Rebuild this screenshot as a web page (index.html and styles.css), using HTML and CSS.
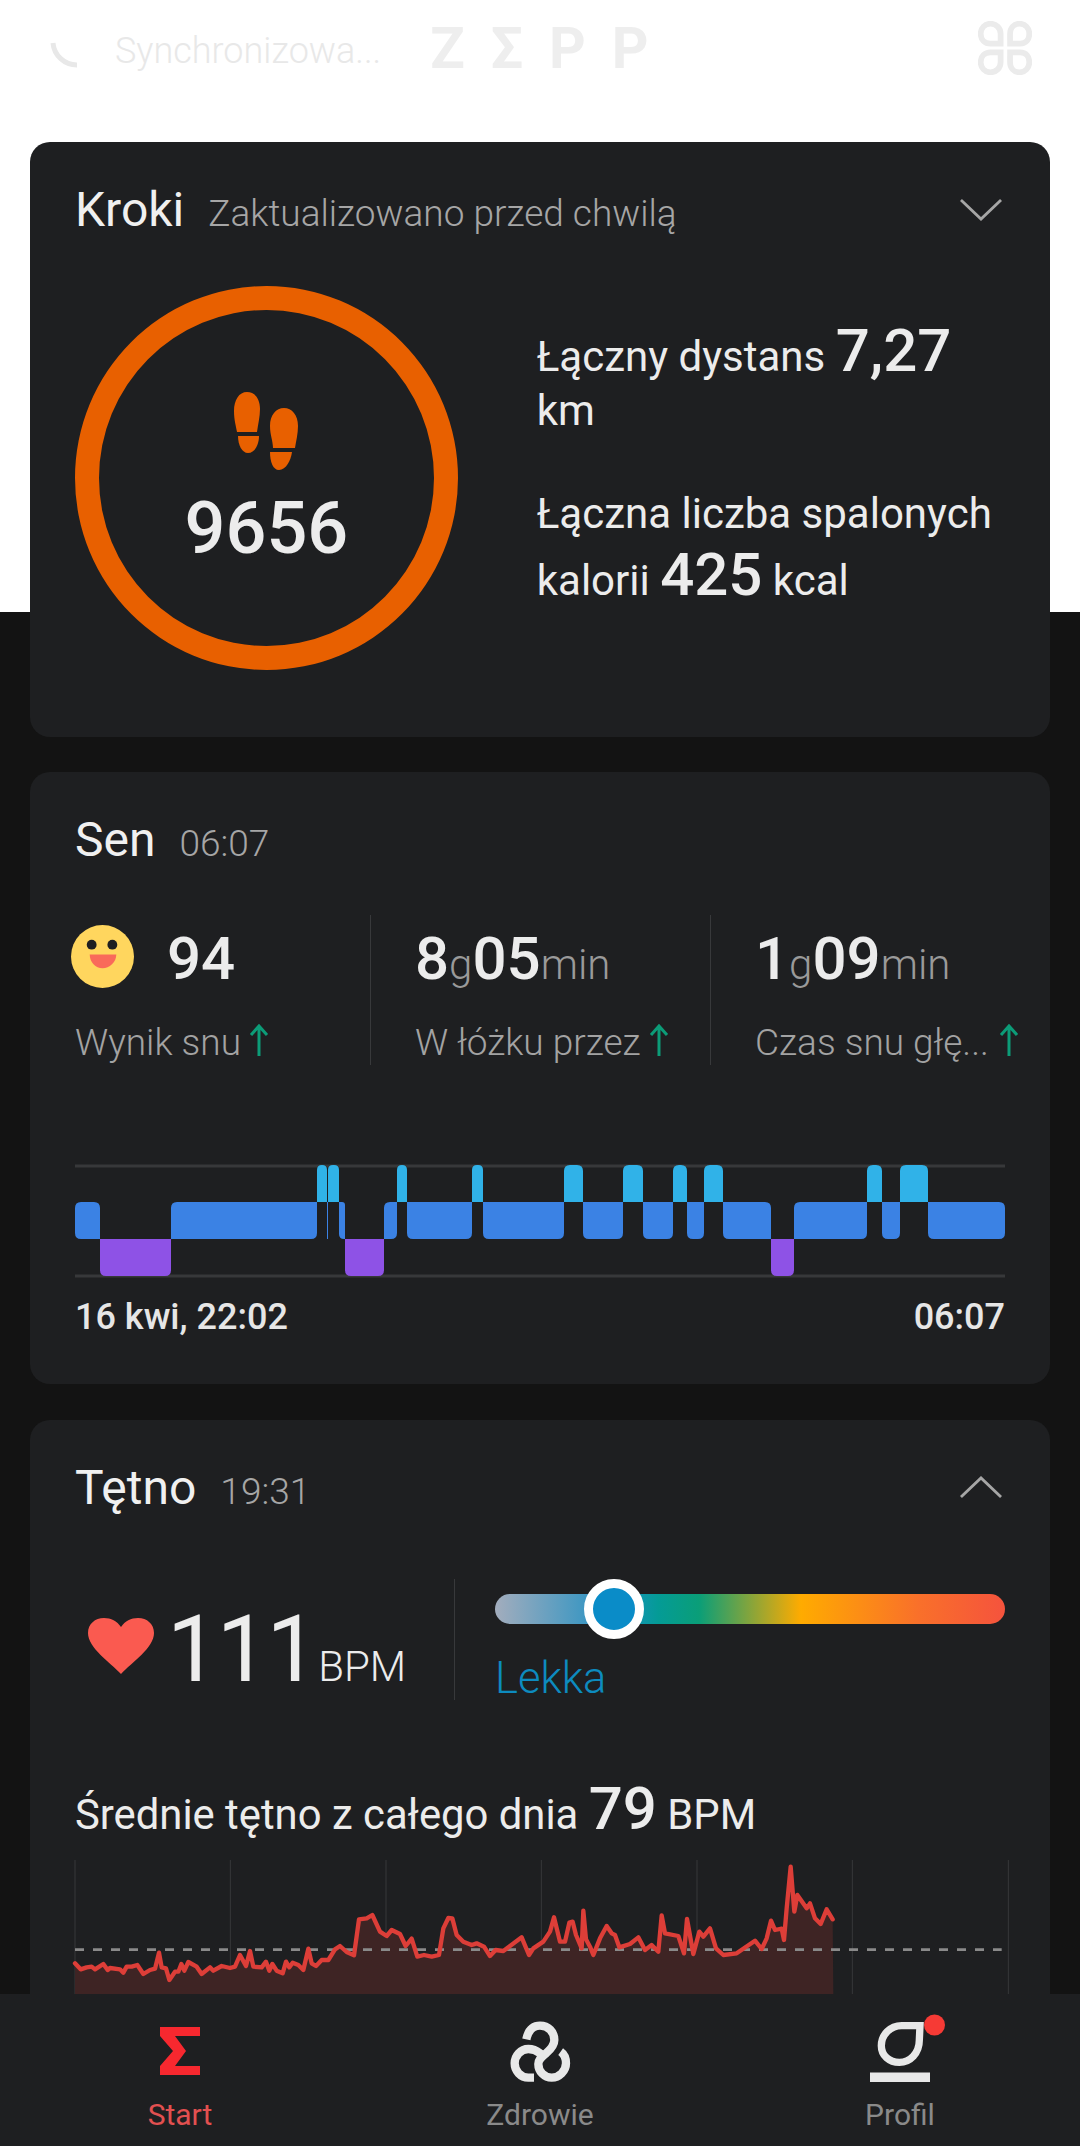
FILE: index.html
```html
<!DOCTYPE html>
<html lang="pl">
  <head>
    <meta charset="UTF-8" />
    <title>Zepp</title>
    <link rel="stylesheet" href="styles.css" />
  </head>
  <body>
    <header class="top">
      <svg class="spinner" viewBox="0 0 30 30">
        <path d="M3 2A24 24 0 0 0 27 24" />
      </svg>
      <span class="sync">Synchronizowa...</span>
      <span class="logo">ZΣPP</span>
      <svg class="apps" viewBox="235 30 160 160">
        <path d="M302 97H272C255 97 243 85 243 68C243 51 255 38 272 38C289 38 302 51 302 68Z" />
        <path d="M330 97H360C377 97 387 85 387 68C387 51 375 38 358 38C341 38 330 51 330 68Z" />
        <path d="M302 123H272C255 123 243 135 243 152C243 169 255 182 272 182C289 182 302 169 302 152Z" />
        <path d="M330 123H360C377 123 387 135 387 152C387 169 375 182 358 182C341 182 330 169 330 152Z" />
      </svg>
    </header>

    <main>
      <section class="card card-steps">
        <div class="card-head">
          <h2>Kroki</h2>
          <span class="sub">Zaktualizowano przed chwilą</span>
          <svg class="chevron" viewBox="0 0 44 24">
            <path d="M1 2L22 22L43 2" />
          </svg>
        </div>
        <div class="steps-body">
          <div class="ring">
            <svg class="feet" viewBox="237 392 64 78">
              <path d="M250 392c8 0 13 7 13 17c0 8-2 15-3 23h-20c-1-6-3-12-3-21c0-11 5-19 13-19z" />
              <path d="M241 436h21c0 8-4 17-11 17c-6 0-10-8-10-17z" />
              <path d="M287 408c8 0 14 7 14 18c0 8-2 15-3 22h-22c0-7-3-13-3-22c0-11 6-18 14-18z" />
              <path d="M273 452h22c-1 8-6 18-13 18c-6 0-9-8-9-18z" />
            </svg>
            <span class="ring-value">9656</span>
          </div>
          <div class="steps-info">
            <p>Łączny dystans <b>7,27</b> km</p>
            <p>Łączna liczba spalonych kalorii <b>425</b> kcal</p>
          </div>
        </div>
      </section>

      <section class="card card-sleep">
        <div class="card-head">
          <h2>Sen</h2>
          <span class="sub">06:07</span>
        </div>
        <div class="sleep-stats">
          <div class="stat">
            <div class="stat-value">
              <svg class="face" viewBox="0 0 64 64">
                <circle cx="32" cy="32" r="32" fill="#ffd65e" />
                <circle cx="21" cy="20" r="5" fill="#1e1f21" />
                <circle cx="42" cy="20" r="5" fill="#1e1f21" />
                <path d="M19 30H46C46 38 39 44 32 44C25 44 19 38 19 30Z" fill="#f96a5a" />
              </svg>
              <b>94</b>
            </div>
            <div class="stat-label">
              <span>Wynik snu</span>
              <svg class="up" viewBox="0 0 20 32"><path d="M10 32V2M2 11L10 2L18 11" /></svg>
            </div>
          </div>
          <div class="stat">
            <div class="stat-value"><b>8</b><small>g</small><b>05</b><small>min</small></div>
            <div class="stat-label">
              <span>W łóżku przez</span>
              <svg class="up" viewBox="0 0 20 32"><path d="M10 32V2M2 11L10 2L18 11" /></svg>
            </div>
          </div>
          <div class="stat">
            <div class="stat-value"><b>1</b><small>g</small><b>09</b><small>min</small></div>
            <div class="stat-label">
              <span>Czas snu głę...</span>
              <svg class="up" viewBox="0 0 20 32"><path d="M10 32V2M2 11L10 2L18 11" /></svg>
            </div>
          </div>
        </div>
        <svg class="sleep-chart" viewBox="75 1160 930 120">
          <path class="grid" d="M75 1166H1005M75 1276H1005" />
          <path class="light" d="M317 1202V1170q0-5 5-5h0q5 0 5 5V1202zM328 1202V1170q0-5 5-5h1q5 0 5 5V1202zM397 1202V1170q0-5 5-5h0q5 0 5 5V1202zM472 1202V1170q0-5 5-5h1q5 0 5 5V1202zM564 1202V1171q0-6 6-6h7q6 0 6 6V1202zM623 1202V1171q0-6 6-6h8q6 0 6 6V1202zM673 1202V1171q0-6 6-6h2q6 0 6 6V1202zM704 1202V1171q0-6 6-6h7q6 0 6 6V1202zM867 1202V1171q0-6 6-6h3q6 0 6 6V1202zM900 1202V1171q0-6 6-6h16q6 0 6 6V1202z" />
          <path class="blue" d="M81 1202H94q6 0 6 6V1239H81q-6 0-6-6V1208q0-6 6-6zM177 1202H317V1233q0 6-6 6H171V1208q0-6 6-6zM327 1202h1V1239h-1zM339 1202H342q3 0 3 3V1239H344q-5 0-5-5zM390 1202H397V1233q0 6-6 6H384V1208q0-6 6-6zM407 1202H472V1233q0 6-6 6H413q-6 0-6-6zM483 1202H564V1233q0 6-6 6H489q-6 0-6-6zM583 1202H623V1233q0 6-6 6H589q-6 0-6-6zM643 1202H673V1233q0 6-6 6H649q-6 0-6-6zM687 1202H704V1233q0 6-6 6H693q-6 0-6-6zM723 1202H765q6 0 6 6V1239H729q-6 0-6-6zM800 1202H867V1233q0 6-6 6H794V1208q0-6 6-6zM882 1202H900V1233q0 6-6 6H888q-6 0-6-6zM928 1202H999q6 0 6 6V1233q0 6-6 6H934q-6 0-6-6z" />
          <path class="purple" d="M100 1239H171V1270q0 6-6 6H106q-6 0-6-6zM345 1239H384V1270q0 6-6 6H351q-6 0-6-6zM771 1239H794V1270q0 6-6 6H777q-6 0-6-6z" />
        </svg>
        <div class="sleep-times">
          <span>16 kwi, 22:02</span>
          <span>06:07</span>
        </div>
      </section>

      <section class="card card-heart">
        <div class="card-head">
          <h2>Tętno</h2>
          <span class="sub">19:31</span>
          <svg class="chevron" viewBox="0 0 44 24">
            <path d="M1 22L22 2L43 22" />
          </svg>
        </div>
        <div class="heart-row">
          <div class="heart-now">
            <svg class="heart" viewBox="0 0 66 56">
              <path d="M33 56C22 44 0 30 0 15C0 6 7 0 16 0C23 0 29 3 33 9C37 3 43 0 50 0C59 0 66 6 66 15C66 30 44 44 33 56Z" />
            </svg>
            <span class="bpm-value">111</span>
            <span class="bpm-unit">BPM</span>
          </div>
          <div class="zone">
            <div class="zone-track"><span class="zone-knob"></span></div>
            <span class="zone-name">Lekka</span>
          </div>
        </div>
        <p class="average">Średnie tętno z całego dnia <b>79</b> BPM</p>
        <svg class="heart-chart" viewBox="45 0 2805 432">
          <path class="grid" d="M45 30V432M511 30V432M978 30V432M1444 30V432M1911 30V432M2377 30V432M2845 30V432" />
          <polygon class="area" points="45,340 62,358 80,352 95,350 105,358 130,342 143,360 150,354 180,358 190,368 200,350 215,350 232,345 250,372 270,360 285,356 297,308 305,352 318,355 328,390 345,365 355,365 364,342 373,362 385,336 410,350 425,372 450,352 460,362 485,348 510,354 525,350 540,315 558,348 570,303 580,350 605,352 618,335 628,362 637,342 650,362 668,370 678,335 688,352 698,338 715,345 730,360 745,296 755,340 768,348 785,330 805,330 825,298 840,288 860,306 882,316 897,208 920,205 937,195 960,245 980,258 995,240 1020,252 1037,288 1055,266 1072,320 1092,315 1115,320 1137,315 1150,235 1165,204 1177,205 1190,255 1210,275 1235,285 1250,280 1272,290 1290,318 1307,300 1330,303 1350,288 1385,262 1407,315 1420,295 1450,275 1470,245 1482,202 1500,275 1515,275 1528,218 1538,215 1548,255 1565,295 1570,182 1578,268 1590,290 1600,315 1620,265 1640,228 1655,250 1665,255 1678,292 1710,282 1735,262 1755,300 1775,285 1795,305 1805,196 1815,250 1855,258 1872,310 1881,207 1900,312 1918,245 1930,260 1950,235 1968,295 1990,315 2030,310 2085,272 2105,297 2120,265 2133,212 2145,240 2165,236 2172,270 2180,175 2192,50 2203,185 2212,135 2240,175 2250,160 2265,205 2282,222 2300,178 2318,208 2320,432 45,432" />
          <path class="dash" d="M45 299H2825" />
          <polyline class="line" points="45,340 62,358 80,352 95,350 105,358 130,342 143,360 150,354 180,358 190,368 200,350 215,350 232,345 250,372 270,360 285,356 297,308 305,352 318,355 328,390 345,365 355,365 364,342 373,362 385,336 410,350 425,372 450,352 460,362 485,348 510,354 525,350 540,315 558,348 570,303 580,350 605,352 618,335 628,362 637,342 650,362 668,370 678,335 688,352 698,338 715,345 730,360 745,296 755,340 768,348 785,330 805,330 825,298 840,288 860,306 882,316 897,208 920,205 937,195 960,245 980,258 995,240 1020,252 1037,288 1055,266 1072,320 1092,315 1115,320 1137,315 1150,235 1165,204 1177,205 1190,255 1210,275 1235,285 1250,280 1272,290 1290,318 1307,300 1330,303 1350,288 1385,262 1407,315 1420,295 1450,275 1470,245 1482,202 1500,275 1515,275 1528,218 1538,215 1548,255 1565,295 1570,182 1578,268 1590,290 1600,315 1620,265 1640,228 1655,250 1665,255 1678,292 1710,282 1735,262 1755,300 1775,285 1795,305 1805,196 1815,250 1855,258 1872,310 1881,207 1900,312 1918,245 1930,260 1950,235 1968,295 1990,315 2030,310 2085,272 2105,297 2120,265 2133,212 2145,240 2165,236 2172,270 2180,175 2192,50 2203,185 2212,135 2240,175 2250,160 2265,205 2282,222 2300,178 2318,208" />
        </svg>
      </section>
    </main>

    <nav class="tabs">
      <a class="tab active">
        <svg viewBox="0 0 100 70">
          <polygon class="sigma" points="30,11 70,11 70,20 45,20 56,35 45,50 70,50 70,59 30,59 30,50 43,35 30,20" />
        </svg>
        <span>Start</span>
      </a>
      <a class="tab">
        <svg viewBox="0 0 100 85" class="loops">
          <path d="M109 88C115 60 130 47 150 47C175 47 193 65 193 90C193 108 180 120 168 130C155 142 145 148 145 162C145 185 163 203 185 203C208 203 228 183 228 160C228 145 222 132 212 125" transform="scale(.3333)" />
          <path d="M132 203C128 203 122 203 115 203C92 203 74 183 74 160C74 137 92 117 115 117C128 117 140 122 150 130C155 134 160 137 165 145" transform="scale(.3333)" />
        </svg>
        <span>Zdrowie</span>
      </a>
      <a class="tab">
        <svg viewBox="-10 5 100 85" class="profile">
          <path d="M180 62H125C90 62 64 90 64 122C64 152 88 172 118 172C150 172 178 145 178 105Z" transform="scale(.3333)" />
          <rect x="10" y="67.500" width="60" height="9.500" />
          <circle cx="74.500" cy="20" r="10.500" />
        </svg>
        <span>Profil</span>
      </a>
    </nav>
  </body>
</html>
```

FILE: styles.css
```css
* {
  box-sizing: border-box;
}
body {
  margin: 0;
  width: 1080px;
  height: 2146px;
  overflow: hidden;
  display: flex;
  flex-direction: column;
  background: linear-gradient(#fff 612px, #131313 612px);
  font-family: Roboto, sans-serif;
  color: #ececec;
}
svg {
  display: block;
  flex: none;
}
b {
  font-weight: 500;
}

/* top bar */
.top {
  flex: none;
  display: flex;
  align-items: center;
  height: 96px;
  margin-bottom: 46px;
  padding: 0 48px 0 50px;
  color: #e8e8e8;
}
.spinner {
  width: 30px;
  height: 30px;
  margin-top: 16px;
  fill: none;
  stroke: #e8e8e8;
  stroke-width: 5;
}
.sync {
  margin: 5px 0 0 35px;
  font-size: 36px;
  font-weight: 300;
}
.logo {
  margin-left: 49px;
  font-size: 57px;
  font-weight: 700;
  letter-spacing: 26px;
  color: #eee;
}
.apps {
  width: 54px;
  height: 54px;
  margin-left: auto;
  fill: none;
  stroke: #ebebeb;
  stroke-width: 17;
}

/* cards */
main {
  flex: 1;
  min-height: 0;
  overflow: hidden;
}
.card {
  margin: 0 30px 35px;
  padding: 0 45px;
  background: #1e1f21;
  border-radius: 20px;
}
.card-head {
  display: flex;
  align-items: baseline;
  height: 136px;
  padding-top: 39px;
}
.card-head h2 {
  margin: 0 24px 0 0;
  font-size: 48px;
  font-weight: 400;
  color: #f0f0f0;
}
.sub {
  font-size: 37px;
  font-weight: 300;
  color: #a6a6a6;
}
.chevron {
  width: 42px;
  height: 23px;
  margin-left: auto;
  align-self: flex-start;
  margin-top: 17px;
  margin-right: 3px;
  fill: none;
  stroke: #a6a6a6;
  stroke-width: 3;
}

/* steps */
.card-steps {
  height: 595px;
}
.steps-body {
  display: flex;
  margin-top: 8px;
}
.ring {
  width: 384px;
  height: 384px;
  border: 24px solid #e86000;
  border-radius: 50%;
  display: flex;
  flex-direction: column;
  align-items: center;
  padding-top: 82px;
}
.feet {
  width: 64px;
  height: 78px;
  fill: #e86000;
}
.ring-value {
  margin-top: 17px;
  font-size: 72px;
  line-height: 84px;
  font-weight: 500;
}
.steps-info {
  margin: 29px 0 0 79px;
  width: 470px;
}
.steps-info p {
  margin: 0 0 53px;
  font-size: 42px;
  font-weight: 400;
  line-height: 50px;
}
.steps-info b {
  font-size: 60px;
  line-height: normal;
}

/* sleep */
.card-sleep {
  height: 612px;
  margin-bottom: 36px;
}
.sleep-stats {
  display: flex;
  height: 150px;
  margin-top: 7px;
}
.stat {
  flex: none;
  width: 340px;
  padding: 20px 0 0 44px;
  border-left: 1px solid #38393b;
}
.stat:first-child {
  width: 295px;
  padding-left: 0;
  border-left: none;
}
.stat:last-child {
  width: 295px;
}
.stat-value {
  display: flex;
  align-items: baseline;
  height: 48px;
  font-size: 60px;
  line-height: 48px;
}
.stat-value small {
  font-size: 42px;
  font-weight: 300;
  color: #9a9a9a;
}
.face {
  align-self: flex-start;
  width: 63px;
  height: 63px;
  margin: -10px 33px 0 -4px;
}
.stat-label {
  display: flex;
  align-items: center;
  margin-top: 38px;
  font-size: 37px;
  line-height: 44px;
  font-weight: 300;
  white-space: nowrap;
  color: #a3a3a3;
}
.up {
  width: 20px;
  height: 32px;
  margin: -6px 0 0 8px;
  fill: none;
  stroke: #0c9c78;
  stroke-width: 3;
}
.stat:last-child .up {
  margin-left: 10px;
}
.sleep-chart {
  width: 930px;
  height: 120px;
  margin-top: 95px;
}
.grid {
  fill: none;
  stroke: #37383a;
  stroke-width: 3;
}
.blue {
  fill: #3b82e4;
}
.light {
  fill: #30b2e8;
}
.purple {
  fill: #8e52e6;
}
.sleep-times {
  display: flex;
  justify-content: space-between;
  margin-top: 15px;
  font-size: 36px;
  line-height: 44px;
  font-weight: 500;
  color: #e6e6e6;
}

/* heart rate */
.card-heart {
  margin-bottom: 0;
  padding-bottom: 40px;
}
.heart-row {
  display: flex;
  height: 121px;
  margin-top: 23px;
}
.heart-now {
  flex: none;
  width: 380px;
  display: flex;
  align-items: baseline;
  padding-left: 13px;
  border-right: 1px solid #38393b;
}
.heart {
  align-self: flex-start;
  width: 66px;
  height: 56px;
  margin-top: 39px;
  fill: #fa5a50;
}
.bpm-value {
  margin-left: 13px;
  font-size: 92px;
  line-height: 142px;
  font-weight: 400;
  letter-spacing: -2px;
}
.bpm-unit {
  margin-left: 2px;
  font-size: 42px;
  font-weight: 300;
}
.zone {
  margin-left: 40px;
  width: 510px;
  padding-top: 15px;
}
.zone-track {
  position: relative;
  height: 30px;
  border-radius: 15px;
  background: linear-gradient(90deg, #a3adbd 0, #1c90c4 24%, #049b96 32%, #0a9e78 40%, #ffab00 60%, #f9702a 83%, #f5533d 100%);
}
.zone-knob {
  position: absolute;
  left: 89px;
  top: -15px;
  width: 60px;
  height: 60px;
  border: 9px solid #fff;
  border-radius: 50%;
  background: #0a8cc8;
}
.zone-name {
  display: block;
  margin-top: 30px;
  font-size: 43.500px;
  line-height: 50px;
  font-weight: 300;
  color: #0d8bbf;
}
.average {
  margin: 79px 0 0;
  font-size: 41.800px;
  line-height: 60px;
  font-weight: 400;
}
.average b {
  font-size: 60px;
  line-height: 60px;
}
.heart-chart {
  width: 935px;
  height: 144px;
  overflow: visible;
  margin-top: 5px;
}
.area {
  fill: #3e2424;
}
.dash {
  fill: none;
  stroke: #8a8a8a;
  stroke-width: 8;
  stroke-dasharray: 27 27;
}
.line {
  fill: none;
  stroke: #dd3e38;
  stroke-width: 13;
  stroke-linejoin: round;
  stroke-linecap: round;
}

/* bottom tabs */
.tabs {
  flex: none;
  height: 152px;
  display: grid;
  grid-template-columns: repeat(3, 1fr);
  background: #1e1f21;
}
.tab {
  display: flex;
  flex-direction: column;
  align-items: center;
  padding-top: 16px;
  font-size: 30px;
  font-weight: 400;
  line-height: 40px;
  color: #8a8a8a;
}
.tab svg {
  width: 100px;
  height: 85px;
}
.tab:first-child svg {
  height: 70px;
  margin-top: 6px;
  margin-bottom: 9px;
}
.tab.active {
  color: #e25050;
}
.sigma {
  fill: #f7282f;
}
.loops path {
  fill: none;
  stroke: #e8e8e8;
  stroke-width: 25;
}
.profile path {
  fill: none;
  stroke: #e8e8e8;
  stroke-width: 22;
  stroke-linejoin: miter;
}
.profile rect {
  fill: #e8e8e8;
}
.profile circle {
  fill: #f63a35;
}
```
